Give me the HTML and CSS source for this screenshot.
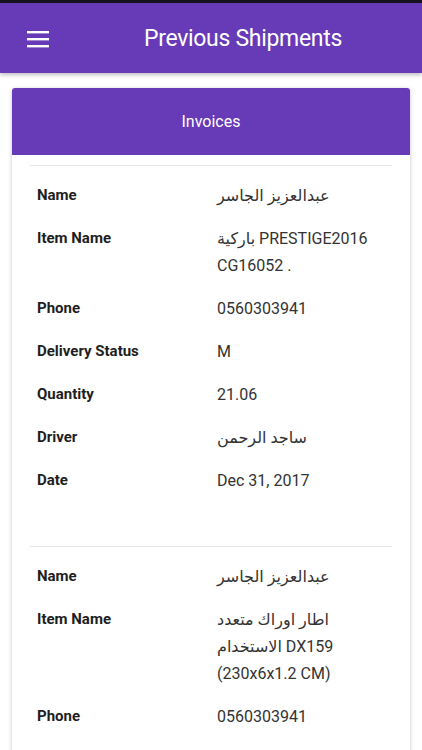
FILE: index.html
```html
<!DOCTYPE html>
<html lang="en">
<head>
<meta charset="utf-8">
<title>Previous Shipments</title>
<link rel="stylesheet" href="styles.css">
</head>
<body>
<div class="status"></div>
<header class="appbar">
  <div class="menu">
    <svg width="22" height="17" viewBox="0 0 22 17"><rect x="0" y="0" width="22" height="2.4" fill="#fff"/><rect x="0" y="7" width="22" height="2.4" fill="#fff"/><rect x="0" y="14" width="22" height="2.4" fill="#fff"/></svg>
  </div>
  <h1 class="title">Previous Shipments</h1>
</header>
<main class="content">
  <section class="card">
    <div class="card-head">Invoices</div>
    <div class="card-body">
      <div class="invoice">
        <div class="row"><div class="label">Name</div><div class="value">عبدالعزيز الجاسر</div></div>
        <div class="row"><div class="label">Item Name</div><div class="value">باركية PRESTIGE2016 CG16052 .</div></div>
        <div class="row"><div class="label">Phone</div><div class="value">0560303941</div></div>
        <div class="row"><div class="label">Delivery Status</div><div class="value">M</div></div>
        <div class="row"><div class="label">Quantity</div><div class="value">21.06</div></div>
        <div class="row"><div class="label">Driver</div><div class="value">ساجد الرحمن</div></div>
        <div class="row"><div class="label">Date</div><div class="value">Dec 31, 2017</div></div>
      </div>
      <div class="invoice invoice-last">
        <div class="row"><div class="label">Name</div><div class="value">عبدالعزيز الجاسر</div></div>
        <div class="row"><div class="label">Item Name</div><div class="value">اطار اوراك متعدد الاستخدام DX159 (230x6x1.2 CM)</div></div>
        <div class="row"><div class="label">Phone</div><div class="value">0560303941</div></div>
      </div>
    </div>
  </section>
</main>
</body>
</html>
```
FILE: styles.css
```css
html, body {
  margin: 0;
  padding: 0;
  background: #ffffff;
  font-family: Roboto, "DejaVu Sans", sans-serif;
  overflow: hidden;
  height: 750px;
}
.status {
  height: 3px;
  background: #17121f;
}
.appbar {
  height: 70px;
  background: #673ab7;
  display: flex;
  align-items: center;
  box-shadow: 0 2px 4px rgba(0,0,0,0.25);
  position: relative;
  z-index: 1;
}
.menu {
  width: 64px;
  display: flex;
  justify-content: flex-start;
  padding-left: 27px;
  box-sizing: border-box;
  padding-top: 2px;
}
.menu svg { display: block; }
.title {
  flex: 1;
  margin: 0;
  text-align: center;
  color: #fff;
  font-weight: 400;
  font-size: 23px;
  letter-spacing: -0.3px;
}
.content {
  padding: 15px 12px 0;
}
.card {
  background: #fff;
  border-radius: 3px;
  box-shadow: 0 1px 4px rgba(0,0,0,0.22);
  overflow: hidden;
}
.card-head {
  height: 67px;
  background: #673ab7;
  color: #fff;
  display: flex;
  align-items: center;
  justify-content: center;
  font-size: 16px;
  padding-bottom: 1px;
  box-sizing: border-box;
}
.card-body {
  padding: 10px 18px 0;
}
.invoice {
  border-top: 1px solid #e6e6e6;
  padding: 8px 0 44px;
}
.invoice-last {
  padding-bottom: 60px;
}
.row {
  display: flex;
  padding: 8px 0 8px 7px;
  line-height: 27px;
}
.label {
  width: 180px;
  flex: none;
  font-weight: 700;
  font-size: 15px;
  color: #1e1e1e;
}
.value {
  flex: none;
  width: 172px;
  font-size: 16px;
  color: #333;
}
```
